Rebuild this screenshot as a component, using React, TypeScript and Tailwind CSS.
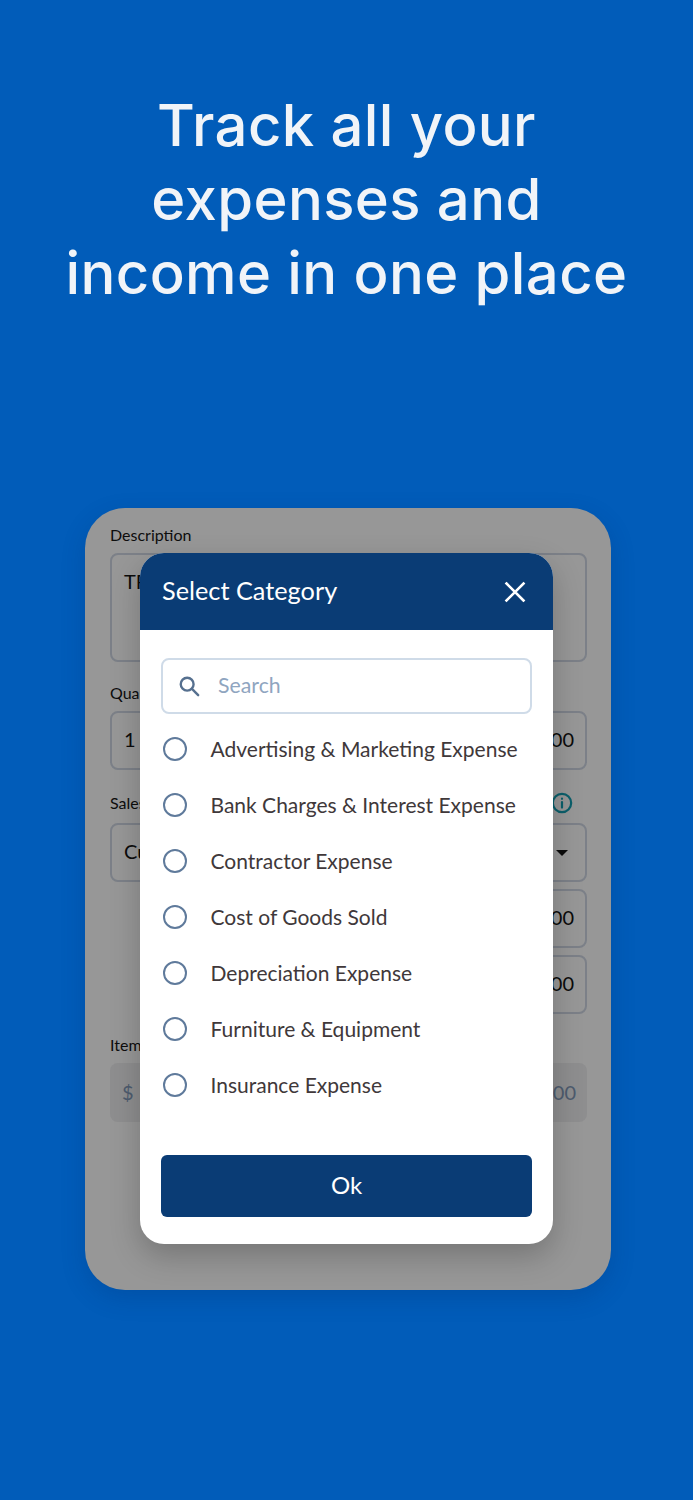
import React from "react";

const NUNITO = "font-['Lato','Noto_Sans',sans-serif]";
const categories = [
  "Advertising & Marketing Expense",
  "Bank Charges & Interest Expense",
  "Contractor Expense",
  "Cost of Goods Sold",
  "Depreciation Expense",
  "Furniture & Equipment",
  "Insurance Expense",
];

function Field({ left, right, caret }: { left?: string; right?: string; caret?: boolean }) {
  return (
    <div className="flex h-[59px] items-center justify-between rounded-[8px] border-2 border-[#7c8088] pb-[3px] pl-[12px] pr-[11px] text-[20px] text-[#0b0b0b]">
      <span>{left}</span>
      {right && <span>{right}</span>}
      {caret && <span className="mr-[6px] mt-[3px] h-0 w-0 border-x-[6px] border-t-[6px] border-x-transparent border-t-[#0b0b0b]" />}
    </div>
  );
}

export default function App() {
  return (
    <div className={`flex h-[1500px] w-[693px] flex-col overflow-hidden bg-[#015cb9] ${NUNITO}`}>
      <h1 className="mt-[88px] w-full text-center font-['Inter',sans-serif] text-[58px] font-medium leading-[74px] tracking-[0.4px] text-[#f1f4f8]">
        Track all your
        <br />
        expenses and
        <br />
        income in one place
      </h1>

      <div className="relative ml-[85px] mt-[198px] h-[782px] w-[526px] rounded-[40px] bg-[#979797] pl-[25px] pr-[24px] pt-[17px] shadow-[0_8px_24px_rgba(0,40,100,0.2)]">
        <div className="text-[16px] leading-[20px] text-[#0d0d0d]">Description</div>
        <div className="mt-[8px] h-[109px] rounded-[8px] border-2 border-[#7c8088] px-[12px] pt-[14px] text-[20px] leading-[24px] text-[#0b0b0b]">
          TR
        </div>
        <div className="mt-[21px] text-[16px] leading-[20px] text-[#0d0d0d]">Quantity</div>
        <div className="mt-[8px] grid grid-cols-2 gap-[10px]">
          <Field left="1" />
          <Field right="0.00" />
        </div>
        <div className="mt-[22px] flex items-center justify-between text-[16px] leading-[20px] text-[#0d0d0d]">
          <span>Sales Tax</span>
          <svg width="22" height="22" viewBox="0 0 24 24" fill="none" stroke="#0b5f6b" strokeWidth="2.4" strokeLinecap="round" className="mr-[14px]">
            <circle cx="12" cy="12" r="10" />
            <path d="M12 11v6M12 7.2v.2" />
          </svg>
        </div>
        <div className="mt-[9px]">
          <Field left="Custom" caret />
        </div>
        <div className="ml-auto mt-[7px] w-[240px]">
          <Field right="0.00" />
        </div>
        <div className="ml-auto mt-[7px] w-[240px]">
          <Field right="0.00" />
        </div>
        <div className="mt-[21px] text-[16px] leading-[20px] text-[#0d0d0d]">Item Total</div>
        <div className="mt-[8px] flex h-[59px] items-center justify-between rounded-[8px] bg-[#8e8e8f] pb-[2px] pl-[12px] pr-[11px] text-[20px] text-[#4d5b6e]">
          <span>$</span>
          <span>0.00</span>
        </div>

        <div className="absolute left-[55px] top-[45px] h-[691px] w-[413px] overflow-hidden rounded-[24px] bg-white shadow-[0_12px_30px_rgba(0,0,0,0.22)]">
          <div className="flex h-[77px] items-center justify-between bg-[#0a3c75] pl-[22px] pr-[26px]">
            <span className="pb-[2px] text-[25.3px] text-white">Select Category</span>
            <svg width="24" height="24" viewBox="0 0 24 24" fill="none" stroke="white" strokeWidth="2.6" strokeLinecap="square">
              <path d="M3.5 3.5l17 17M20.5 3.5l-17 17" />
            </svg>
          </div>
          <div className="px-[21px] pt-[28px]">
            <div className="flex h-[56px] items-center rounded-[8px] border-2 border-[#cfdbe8] pl-[15px]">
              <svg width="22" height="22" viewBox="0 0 24 24" fill="none" stroke="#56708f" strokeWidth="2.6" strokeLinecap="round">
                <circle cx="10" cy="10" r="7" />
                <path d="M15.5 15.5L22 22" />
              </svg>
              <span className="ml-[18px] text-[21.3px] text-[#8fa5c0]">Search</span>
            </div>
            <div className="mt-[7px] flex flex-col">
              {categories.map((c) => (
                <div key={c} className="flex h-[56px] items-center pl-[2px]">
                  <span className="h-[24px] w-[24px] shrink-0 rounded-full border-[2.5px] border-[#5f7a9b]" />
                  <span className="ml-[23.5px] whitespace-nowrap pb-[1px] text-[21px] text-[#40383a]">{c}</span>
                </div>
              ))}
            </div>
            <div className="mt-[42px] flex h-[62px] items-center justify-center rounded-[6px] bg-[#0a3c75] pb-[2px] text-[24px] text-white">
              Ok
            </div>
          </div>
        </div>
      </div>
    </div>
  );
}
